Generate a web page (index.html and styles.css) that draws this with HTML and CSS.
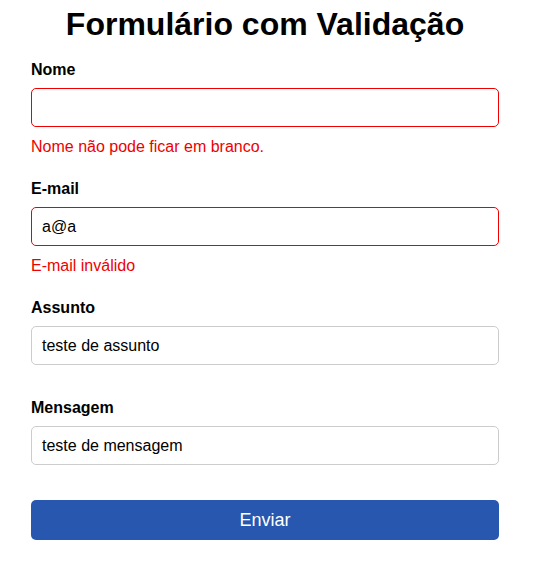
FILE: index.html
```html
<!DOCTYPE html>
<html lang="pt-BR">
<head>
<meta charset="utf-8">
<title>Formulário com Validação</title>
<link rel="stylesheet" href="styles.css">
</head>
<body>
<div class="container">
  <h1 class="title">Formulário com Validação</h1>
  <form class="form">
    <div class="group">
      <label class="label">Nome</label>
      <div class="input invalid"></div>
      <div class="error">Nome não pode ficar em branco.</div>
    </div>
    <div class="group">
      <label class="label">E-mail</label>
      <div class="input invalid">a@a</div>
      <div class="error">E-mail inválido</div>
    </div>
    <div class="group">
      <label class="label">Assunto</label>
      <div class="input">teste de assunto</div>
      <div class="error empty"></div>
    </div>
    <div class="group">
      <label class="label">Mensagem</label>
      <div class="input">teste de mensagem</div>
      <div class="error empty"></div>
    </div>
    <div class="button">Enviar</div>
  </form>
</div>
</body>
</html>
```
FILE: styles.css
```css
* { box-sizing: border-box; }
html, body { margin: 0; padding: 0; background: #fff; }
body { font-family: "Liberation Sans", Arial, sans-serif; color: #000; }
.container { width: 468px; margin-left: 31px; padding-top: 6px; }
.title { margin: 0 0 18px; font-size: 32px; font-weight: bold; text-align: center; line-height: 37px; }
.form { display: flex; flex-direction: column; }
.group { display: flex; flex-direction: column; margin-bottom: 24px; }
.label { display: block; font-size: 16px; font-weight: bold; line-height: 18px; margin-bottom: 9px; }
.input { height: 39px; border: 1px solid #ccc; border-radius: 5px; padding: 0 10px; font-size: 16px; line-height: 37px; }
.input.invalid { border-color: #e00; }
.error { margin-top: 11px; color: #e00; font-size: 16px; line-height: 18px; }
.error.empty { height: 0; margin-top: 10px; }
.button { margin-top: 1px; height: 40px; border-radius: 5px; background: #2757ae; color: #fff; font-size: 18px; text-align: center; line-height: 40px; }
```
